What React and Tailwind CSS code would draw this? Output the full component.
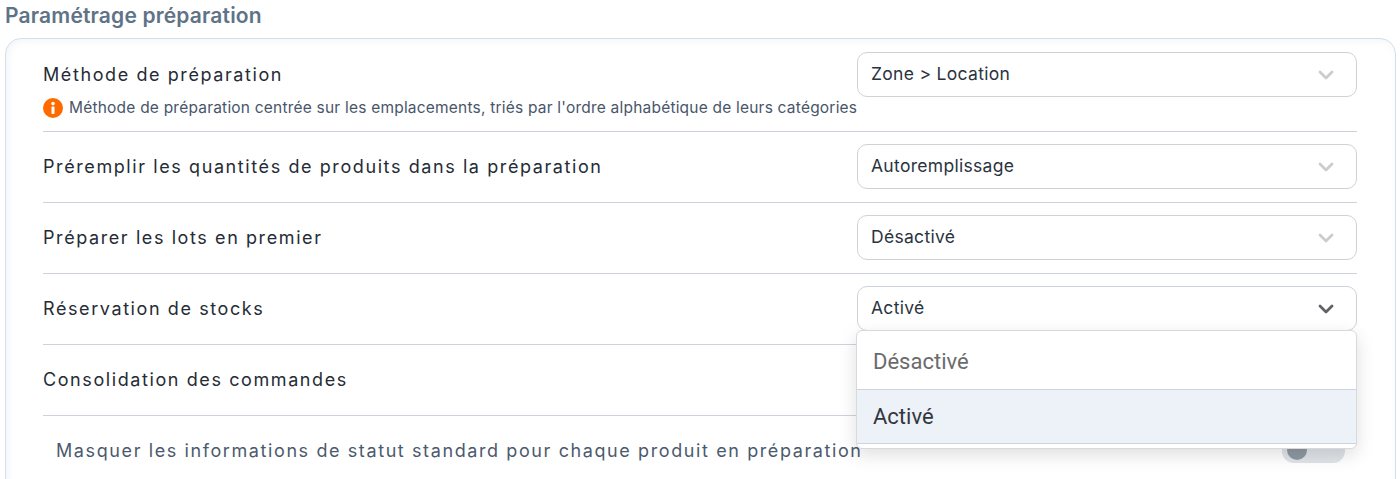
import { ChevronDown } from "lucide-react"

const rows = [
  { label: "Préremplir les quantités de produits dans la préparation", value: "Autoremplissage" },
  { label: "Préparer les lots en premier", value: "Désactivé" },
]

const poppins = { fontFamily: "Inter, sans-serif" }

function Select({ value, open }) {
  return (
    <div className="relative w-[500px] h-[45px] shrink-0 flex items-center justify-between pl-[13px] pr-[18px] bg-white border border-[#cfd2d6] rounded-[10px]">
      <span className="text-[17.5px] tracking-[0.3px] text-[#2b3340]">{value}</span>
      <ChevronDown
        className={open ? "w-[24px] h-[24px] text-[#5f6368]" : "w-[24px] h-[24px] text-[#cccccc]"}
        strokeWidth={2.8}
      />
    </div>
  )
}

function Row({ label, value, children, open }) {
  return (
    <div className="relative border-b border-[#ccd3dc] pt-[12px] pb-[13px]">
      <div className="flex items-center justify-between">
        <span className="text-[18px] tracking-[1.59px] text-[#262c36]">{label}</span>
        {value ? <Select value={value} open={open} /> : <div className="h-[45px]" />}
      </div>
      {children}
    </div>
  )
}

export default function App() {
  return (
    <div className="h-[479px] overflow-hidden bg-white pl-[5px] pr-[4px]" style={poppins}>
      <h2 className="h-[38px] pt-[3px] text-[21px] tracking-[0.17px] leading-[26px] font-semibold text-[#5f7387]">
        Paramétrage préparation
      </h2>
      <div className="relative h-[460px] border border-[#d5deea] rounded-[16px] pl-[37px] pr-[38px] pt-[1px] shadow-[inset_2px_2px_6px_rgba(214,224,236,0.35)]">
        {/* Méthode de préparation */}
        <div className="border-b border-[#ccd3dc] pt-[12px] pb-[13px]">
          <div className="flex items-center justify-between">
            <span className="text-[18px] tracking-[1.59px] text-[#262c36]">Méthode de préparation</span>
            <Select value="Zone > Location" />
          </div>
          <div className="flex items-center gap-[6px] mt-[1px] h-[20px]">
            <svg viewBox="0 0 20 20" className="w-[20px] h-[20px] shrink-0">
              <circle cx="10" cy="10" r="10" fill="#ff6a00" />
              <rect x="8.5" y="8.5" width="3" height="7.5" rx="0.8" fill="#fff" />
              <circle cx="10" cy="5.6" r="1.8" fill="#fff" />
            </svg>
            <span className="text-[15.5px] tracking-[0.21px] text-[#48566a]">
              Méthode de préparation centrée sur les emplacements, triés par l'ordre alphabétique de leurs catégories
            </span>
          </div>
        </div>

        {rows.map((row) => (
          <Row key={row.label} label={row.label} value={row.value} />
        ))}

        <Row label="Réservation de stocks" value="Activé" open>
          {/* Menu ouvert */}
          <div className="absolute z-10 top-[56px] right-0 w-[501px] h-[119px] bg-white border border-[#d6d9de] rounded-[6px] overflow-hidden shadow-[0_6px_18px_rgba(0,0,0,0.13)]" style={{ fontFamily: "Roboto, sans-serif" }}>
            <div className="h-[59px] flex items-center pl-[16px] pt-[3px] border-b border-[#cdd4df] text-[22px] text-[#6b6b6b]">
              Désactivé
            </div>
            <div className="h-[54px] flex items-center pl-[16px] border-b border-[#cdd4df] bg-[#edf1f8] text-[22px] text-[#33373d]">
              Activé
            </div>
          </div>
        </Row>

        <Row label="Consolidation des commandes" />

        <div className="flex items-center justify-between pt-[21px] pl-[13px] pr-[12px]">
          <span className="text-[18px] tracking-[1.6px] text-[#4c5a6e]">
            Masquer les informations de statut standard pour chaque produit en préparation
          </span>
          <div className="relative w-[63px] h-[24px] rounded-full bg-[#e0e4e8]">
            <div className="absolute left-[5px] top-[1px] w-[20px] h-[20px] rounded-full bg-[#8f99a3]" />
          </div>
        </div>
      </div>
    </div>
  )
}
